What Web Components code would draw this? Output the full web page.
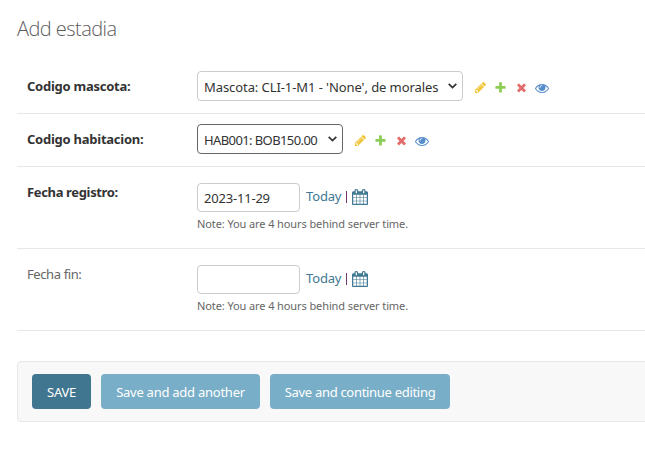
<!DOCTYPE html>
<html lang="es">
<head>
<meta charset="utf-8">
<title>Add estadia</title>
<style>
html,body{margin:0;height:460px;overflow:hidden;background:#fff}
body{font:13px/20px "Noto Sans","Open Sans",sans-serif;color:#333}
</style>
</head>
<body>
<estadia-page></estadia-page>
<script>
const define = (name, html) => customElements.define(name, class extends HTMLElement {
  connectedCallback() {
    if (this.shadowRoot) return;
    const t = document.createElement('template');
    t.innerHTML = html;
    this.attachShadow({mode: 'open'}).append(t.content.cloneNode(true));
  }
});

define('select-box', `<style>
:host{display:flex;box-sizing:border-box;height:30px;border:1px solid #ccc;border-radius:4px;padding:0 5px 0 6px;align-items:center;justify-content:space-between;background:#fff;white-space:nowrap;line-height:28px}
:host([hovered]){border-color:#666}
span{padding-top:2px}
svg{display:block;flex:none}
</style><span><slot></slot></span>
<svg width="9" height="6" viewBox="0 0 9 6"><path d="M.7.8 4.5 4.6 8.3.8" fill="none" stroke="#333" stroke-width="1.7"/></svg>`);

define('related-links', `<style>
:host{display:flex;align-items:center;gap:7.3px;margin-left:11px;height:33px}
svg{display:block}
</style>
<svg width="13" height="13" viewBox="0 0 1792 1792"><path fill="#efb80b" fill-opacity=".8" d="M491 1536l91-91-235-235-91 91v107h128v128h107zm523-928q0-22-22-22-10 0-17 7l-542 542q-7 7-7 17 0 22 22 22 10 0 17-7l542-542q7-7 7-17zm-54-192l416 416-832 832h-416v-416zm683 96q0 53-37 90l-166 166-416-416 166-165q36-38 90-38 53 0 91 38l235 234q37 39 37 91z"/></svg>
<svg width="13" height="13" viewBox="0 0 1792 1792"><path fill="#70bf2b" fill-opacity=".8" d="M1600 796v192q0 40-28 68t-68 28h-416v416q0 40-28 68t-68 28h-192q-40 0-68-28t-28-68v-416h-416q-40 0-68-28t-28-68v-192q0-40 28-68t68-28h416v-416q0-40 28-68t68-28h192q40 0 68 28t28 68v416h416q40 0 68 28t28 68z"/></svg>
<svg width="13" height="13" viewBox="0 0 1792 1792"><path fill="#dd4646" fill-opacity=".8" d="M1490 1322q0 40-28 68l-136 136q-28 28-68 28t-68-28l-294-294-294 294q-28 28-68 28t-68-28l-136-136q-28-28-28-68t28-68l294-294-294-294q-28-28-28-68t28-68l136-136q28-28 68-28t68 28l294 294 294-294q28-28 68-28t68 28l136 136q28 28 28 68t-28 68l-294 294 294 294q28 28 28 68z"/></svg>
<svg width="14" height="14" viewBox="0 0 1792 1792"><path fill="#2b70bf" fill-opacity=".8" d="M1664 960q-152-236-381-353 61 104 61 225 0 185-131.500 316.500t-316.500 131.500-316.500-131.500-131.500-316.500q0-121 61-225-229 117-381 353 133 205 333.500 326.500t434.500 121.500 434.500-121.500 333.500-326.500zm-720-384q0-20-14-34t-34-14q-125 0-214.500 89.500t-89.500 214.500q0 20 14 34t34 14 34-14 14-34q0-86 61-147t147-61q20 0 34-14t14-34zm848 384q0 34-20 69-140 230-376.500 368.500t-499.500 138.500-499.500-139-376.500-368q-20-35-20-69t20-69q140-229 376.500-368t499.500-139 499.500 139 376.500 368q20 35 20 69z"/></svg>`);

define('date-field', `<style>
:host{display:block}
.line{display:flex;align-items:flex-start}
.input{box-sizing:border-box;width:103px;height:29px;border:1px solid #ccc;border-radius:4px;padding:1px 6px 0;line-height:27px;letter-spacing:-.2px}
.today{margin-left:6px;padding-top:3px;line-height:20px;color:#417893;letter-spacing:-.15px}
.bar{width:1px;height:12px;background:#70346f;margin:8px 0 0 5px}
svg{display:block;margin:6px 0 0 5px}
.note{font-size:11px;line-height:16px;color:#666;margin-top:4px;white-space:nowrap;letter-spacing:-.1px}
</style>
<div class="line"><div class="input"><slot></slot></div><span class="today">Today</span><span class="bar"></span>
<svg width="16" height="16" viewBox="64 0 1664 1792" preserveAspectRatio="none"><path fill="#417893" d="M192 1664h288v-288h-288v288zm352 0h320v-288h-320v288zm-352-352h288v-320h-288v320zm352 0h320v-320h-320v320zm-352-384h288v-288h-288v288zm736 736h320v-288h-320v288zm-384-736h320v-288h-320v288zm768 736h288v-288h-288v288zm-384-352h320v-320h-320v320zm-352-864v-288q0-13-9.500-22.500t-22.500-9.500h-64q-13 0-22.500 9.500t-9.500 22.500v288q0 13 9.500 22.500t22.500 9.500h64q13 0 22.500-9.500t9.500-22.500zm736 864h288v-320h-288v320zm-384-384h320v-288h-320v288zm384 0h288v-288h-288v288zm32-480v-288q0-13-9.500-22.500t-22.500-9.500h-64q-13 0-22.500 9.500t-9.500 22.500v288q0 13 9.500 22.500t22.500 9.500h64q13 0 22.500-9.500t9.500-22.500zm384-64v1280q0 52-38 90t-90 38h-1408q-52 0-90-38t-38-90v-1280q0-52 38-90t90-38h128v-96q0-66 47-113t113-47h64q66 0 113 47t47 113v96h384v-96q0-66 47-113t113-47h64q66 0 113 47t47 113v96h128q52 0 90 38t38 90z"/></svg></div>
<div class="note">Note: You are 4 hours behind server time.</div>`);

define('form-row', `<style>
:host{display:flex;box-sizing:border-box;border-bottom:1px solid #e8e8e8;padding:0 10px;height:53px;padding-top:10px}
:host([tall]){height:82px;padding-top:16px}
.label{width:170px;flex:none;color:#666;line-height:20px;padding-top:5px;white-space:nowrap;letter-spacing:-.4px}
:host([tall]) .label{padding-top:0;line-height:18px}
:host([required]) .label{font-weight:700;color:#333;letter-spacing:-.25px}
:host([required][tall]) .label{letter-spacing:-.35px}
.field{display:flex}
</style><div class="label"><slot name="label"></slot></div><div class="field"><slot></slot></div>`);

define('submit-button', `<style>
:host{display:block;height:35px;box-sizing:border-box;border-radius:4px;background:#79aec8;color:#fff;text-align:center;line-height:35px;padding-top:1px;white-space:nowrap;letter-spacing:-.25px}
:host([primary]){background:#417690}
</style><slot></slot>`);

define('submit-row', `<style>
:host{display:flex;gap:10px;box-sizing:border-box;height:61px;margin:30px -20px 0 0;padding:12px 14px;background:#f8f8f8;border:1px solid #e8e8e8;border-radius:4px}
</style><slot></slot>`);

define('estadia-page', `<style>
:host{display:block;padding:16px 0 0 17px}
h1{margin:0;font:300 20px/26px "Open Sans","Noto Sans",sans-serif;color:#5c5c5c;height:45px;letter-spacing:-.55px}
.a{width:266px;letter-spacing:-.08px}.b{width:146px;letter-spacing:-.6px}
.s{width:59px}.n{width:159px}.c{width:180px;letter-spacing:-.3px}
</style>
<h1><span>Add estadia</span></h1>
<form-row required><span slot="label">Codigo mascota:</span><select-box class="a">Mascota: CLI-1-M1 - 'None', de morales</select-box><related-links></related-links></form-row>
<form-row required><span slot="label">Codigo habitacion:</span><select-box class="b" hovered>HAB001: BOB150.00</select-box><related-links></related-links></form-row>
<form-row required tall><span slot="label">Fecha registro:</span><date-field>2023-11-29</date-field></form-row>
<form-row tall><span slot="label">Fecha fin:</span><date-field></date-field></form-row>
<submit-row><submit-button class="s" primary>SAVE</submit-button><submit-button class="n">Save and add another</submit-button><submit-button class="c">Save and continue editing</submit-button></submit-row>`);
</script>
</body>
</html>
